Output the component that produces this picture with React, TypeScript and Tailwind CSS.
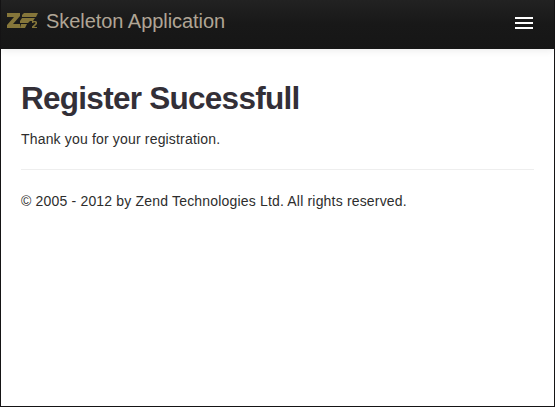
function Logo() {
  return (
    <svg width="31" height="16" viewBox="0 0 31 16" fill="#85763a" aria-label="ZF2" className="shrink-0">
      <path d="M0 0H13V3L6 11H13V15H0V12L7 4H0Z" />
      <path d="M17 0H31L29 4H15V2Z" />
      <path d="M15 5H28L26 8H23L21 10H13V8Z" />
      <path d="M14 11H20L18 15H13Z" />
      <path d="M25 8H29L30 9V11L27 14H30V15H25V13.5L28.3 10.5V9.3H26.5V10H25Z" />
    </svg>
  );
}

export default function App() {
  return (
    <div className="flex h-[407px] w-[555px] flex-col border border-t-0 border-[#151415] bg-white font-['Liberation_Sans',Arial,sans-serif] text-sm leading-5 text-[#2d2d2d]">
      <header className="flex h-[49px] shrink-0 items-start justify-between bg-linear-to-b from-[#222] via-[#181818] via-50% to-[#161616] pl-1.5 pr-[21px] shadow-[0_1px_8px_rgba(0,0,0,0.09)]">
        <a className="flex items-start">
          <span className="pt-[13px]"><Logo /></span>
          <span className="pt-[11px] pl-2 text-[20px] leading-5 tracking-[-0.05px] text-[#b0a595]">Skeleton Application</span>
        </a>
        <button className="mt-[17px] flex flex-col gap-[3px]" aria-label="Menu">
          <span className="h-0.5 w-[18px] bg-white" />
          <span className="h-0.5 w-[18px] bg-white" />
          <span className="h-0.5 w-[18px] bg-white" />
        </button>
      </header>
      <main className="px-5 pt-[31px]">
        <h1 className="text-[31.5px] leading-9 font-bold tracking-[-0.73px] text-[#332f37]">Register Sucessfull</h1>
        <p className="mt-[13px] tracking-[0.17px]">Thank you for your registration.</p>
        <hr className="mt-5 mb-[21px] border-[#eee]" />
        <footer className="tracking-[0.18px]">© 2005 - 2012 by Zend Technologies Ltd. All rights reserved.</footer>
      </main>
    </div>
  );
}
